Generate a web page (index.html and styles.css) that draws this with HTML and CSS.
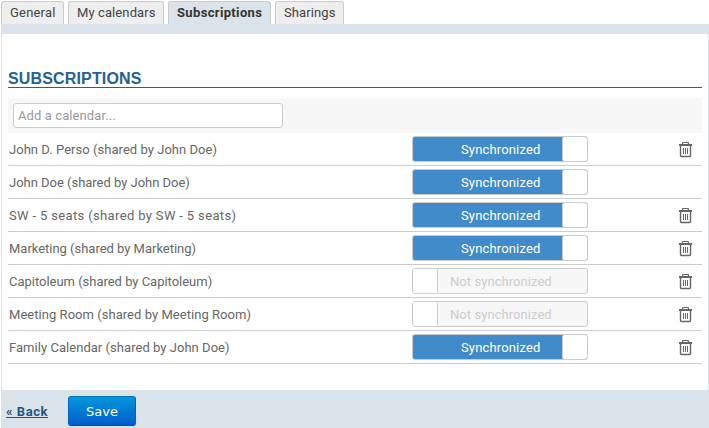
FILE: index.html
```html
<!DOCTYPE html>
<html lang="en">
<head>
<meta charset="utf-8">
<title>Subscriptions</title>
<link rel="stylesheet" href="styles.css">
</head>
<body>
<svg width="0" height="0" class="defs">
  <symbol id="trash" viewBox="0 0 13 16">
    <path d="M3.5 2V1.5Q3.5.5 4.5.5H8.5Q9.5.5 9.5 1.5V2" fill="none" stroke="#666" stroke-width="1.2" />
    <path d="M0 2H13V4H0Z" fill="#666" />
    <path d="M1.5 4V13.5Q1.5 14.5 2.5 14.5H10.5Q11.5 14.5 11.5 13.5V4" fill="none" stroke="#666" stroke-width="1.4" />
    <path d="M4.5 6V12M6.5 6V12M8.5 6V12" fill="none" stroke="#666" />
  </symbol>
</svg>
<nav class="tabs">
  <a class="tab general">General</a>
  <a class="tab calendars">My calendars</a>
  <a class="tab active">Subscriptions</a>
  <a class="tab sharings">Sharings</a>
</nav>
<main class="panel">
  <h1>SUBSCRIPTIONS</h1>
  <div class="search"><input type="text" placeholder="Add a calendar..."></div>
  <ul class="list">
    <li><span class="name">John D. Perso (shared by John Doe)</span><span class="toggle on"><b>Synchronized</b><i></i></span><svg class="trash"><use href="#trash"/></svg></li>
    <li><span class="name tight">John Doe (shared by John Doe)</span><span class="toggle on"><b>Synchronized</b><i></i></span></li>
    <li><span class="name wide">SW - 5 seats (shared by SW - 5 seats)</span><span class="toggle on"><b>Synchronized</b><i></i></span><svg class="trash"><use href="#trash"/></svg></li>
    <li><span class="name tight">Marketing (shared by Marketing)</span><span class="toggle on"><b>Synchronized</b><i></i></span><svg class="trash"><use href="#trash"/></svg></li>
    <li><span class="name tight">Capitoleum (shared by Capitoleum)</span><span class="toggle off"><i></i><b>Not synchronized</b></span><svg class="trash"><use href="#trash"/></svg></li>
    <li><span class="name">Meeting Room (shared by Meeting Room)</span><span class="toggle off"><i></i><b>Not synchronized</b></span><svg class="trash"><use href="#trash"/></svg></li>
    <li><span class="name">Family Calendar (shared by John Doe)</span><span class="toggle on"><b>Synchronized</b><i></i></span><svg class="trash"><use href="#trash"/></svg></li>
  </ul>
</main>
<footer class="actions">
  <a class="back" href="#">« Back</a>
  <button class="save">Save</button>
</footer>
</body>
</html>
```
FILE: styles.css
```css
* { box-sizing: border-box; }
body {
  margin: 0;
  height: 428px;
  overflow: hidden;
  background: #fff;
  color: #666;
  font: 13px/16px Roboto, "Liberation Sans", sans-serif;
  letter-spacing: 0.1px;
}
.defs { display: block; }
.tabs {
  display: flex;
  gap: 4px;
  padding: 1px 0 0 1px;
  height: 24px;
}
.tab {
  height: 23px;
  padding: 3px 0 0 8px;
  border: 1px solid #ccc;
  border-bottom: 0;
  border-radius: 3px 3px 0 0;
  background: #eee;
  color: #444;
  white-space: nowrap;
}
.general { width: 63px; letter-spacing: 0.2px; }
.calendars { width: 96px; }
.active {
  width: 103px;
  background: #dae3e9;
  color: #333;
  font-weight: bold;
  letter-spacing: 0.35px;
}
.sharings { width: 69px; }
.panel {
  height: 366px;
  margin-left: 1px;
  padding: 34px 6px 0;
  border: 1px solid #dae3e9;
  border-top-width: 10px;
  border-bottom: 0;
}
h1 {
  margin: 0 0 10px;
  height: 20px;
  border-bottom: 1px solid #236192;
  color: #236192;
  font: bold 16px/21px "Liberation Sans", sans-serif;
  letter-spacing: 0.15px;
}
.search { height: 35px; padding: 5px; background: #f7f7f7; }
.search input {
  display: block;
  width: 270px;
  height: 25px;
  padding: 0 4px;
  border: 1px solid #ccc;
  border-radius: 3px;
  background: #fff;
  font: inherit;
  letter-spacing: inherit;
}
.search input::placeholder { color: #999; opacity: 1; }
.list { margin: 0; padding: 0; list-style: none; }
.list li {
  display: flex;
  align-items: center;
  height: 33px;
  border-bottom: 1px solid #ccc;
}
.name { width: 404px; padding: 2px 0 0 1px; letter-spacing: 0.04px; white-space: nowrap; }
.tight { letter-spacing: -0.02px; }
.wide { letter-spacing: 0.35px; }
.toggle {
  display: flex;
  width: 176px;
  height: 26px;
  border: 1px solid #ccc;
  border-radius: 3px;
  overflow: hidden;
}
.toggle b { width: 149px; font-weight: normal; line-height: 25px; }
.toggle i { width: 25px; background: #fff; }
.on { background: #428bca; color: #fff; letter-spacing: 0.15px; }
.on b { padding-left: 48px; }
.on i { border-left: 1px solid #ccc; border-radius: 2px 0 0 2px; }
.off { background: #f7f7f7; color: #ccc; letter-spacing: 0.06px; }
.off b { padding-left: 12px; }
.off i { border-right: 1px solid #ccc; border-radius: 0 2px 2px 0; }
.trash { width: 13px; height: 16px; margin: 1px 0 0 91px; }
.actions {
  display: flex;
  height: 38px;
  margin-left: 1px;
  padding: 6px 0 0 5px;
  background: #dae3e9;
}
.back { width: 62px; padding-top: 8px; color: #1f5581; font-weight: bold; letter-spacing: 0.55px; }
.save {
  width: 68px;
  height: 30px;
  padding: 0;
  border: 1px solid #0064cd;
  border-color: #0077c4 #0064cd #004fae;
  border-radius: 3px;
  background: linear-gradient(#0497db, #005dcc);
  color: #fff;
  font: 13px "DejaVu Sans", sans-serif;
}
```
